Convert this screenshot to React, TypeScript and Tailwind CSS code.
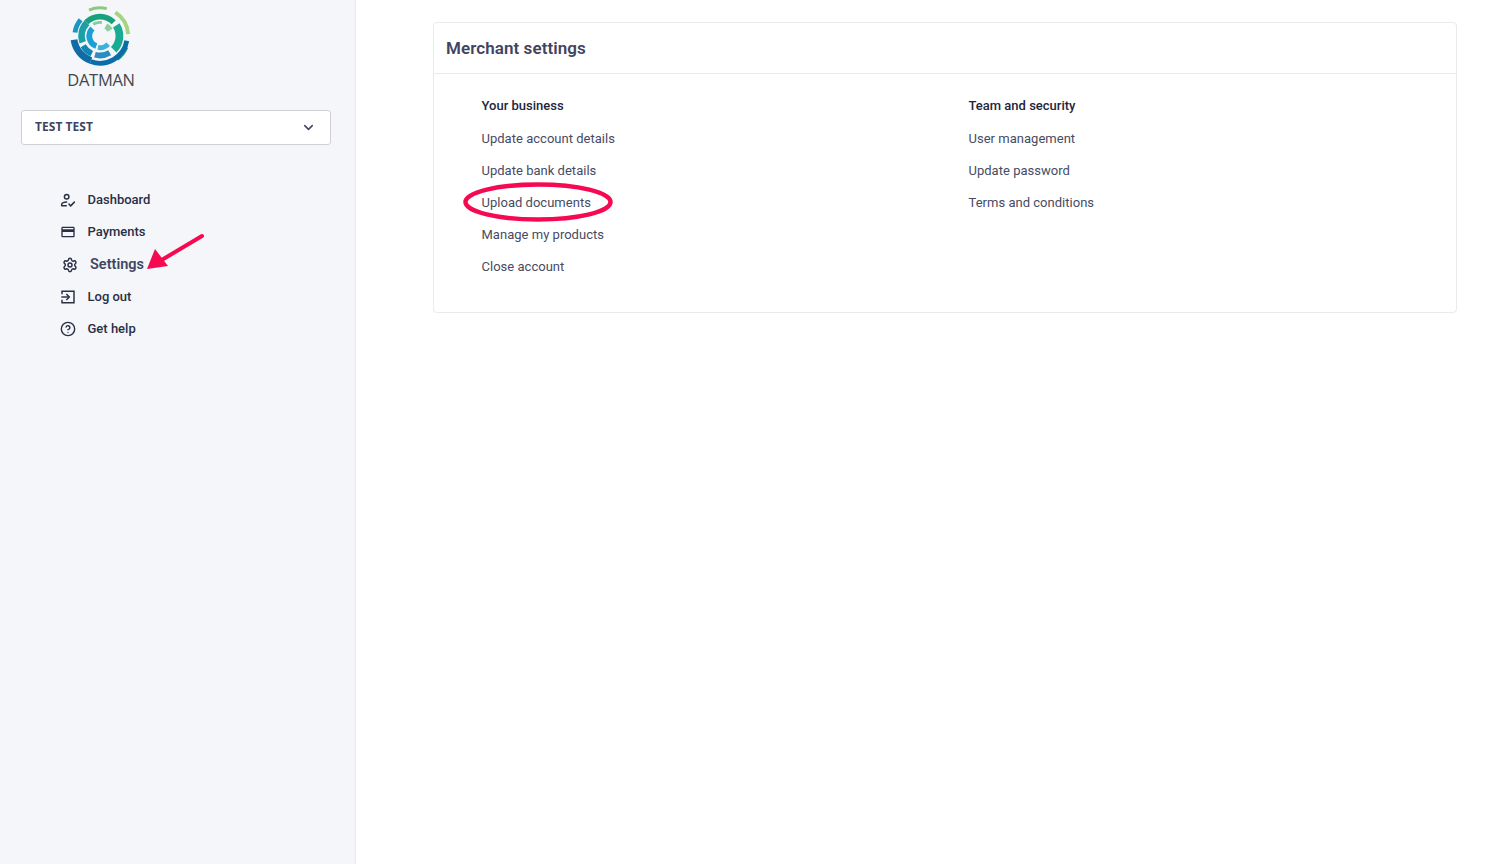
import React from 'react';
import { ChevronDown, HelpCircle, Settings } from 'lucide-react';

// Polar helper for the logo rings, angle 0 is at 12 o'clock
const arc = (r: number, from: number, to: number) => {
  const pt = (a: number) => {
    const rad = ((a - 90) * Math.PI) / 180;
    return `${(50 + r * Math.cos(rad)).toFixed(2)} ${(50 + r * Math.sin(rad)).toFixed(2)}`;
  };
  return `M${pt(from)} A${r} ${r} 0 ${to - from > 180 ? 1 : 0} 1 ${pt(to)}`;
};

const logoArcs: [number, number, number, string, number][] = [
  [29, -23, 14, '#8cc97f', 3],
  [29, 33, 86, '#a5d47f', 4],
  [29, 113, 144, '#2f9e6d', 5],
  [26, -82, -50, '#1d94c4', 5],
  [28, 100, 200, '#0a6fa8', 5],
  [27, 200, 262, '#0f6ca6', 7],
  [20, -45, 45, '#18a27c', 6],
  [20, 57, 135, '#1bab93', 8],
  [20, 150, 195, '#2a8dc0', 6],
  [20, 205, 240, '#1386b8', 6],
  [19, 250, 315, '#1aa0a5', 7],
  [14, -30, 8, '#7fcf9e', 3],
  [12, 30, 60, '#8bcf9a', 6],
  [12, 135, 190, '#38b3dd', 5],
  [11, 200, 315, '#1c9fd4', 6],
];

const DatmanLogo = () => (
  <div className="flex flex-col items-center pt-[2px]">
    <svg viewBox="15 15 70 70" className="w-[68px] h-[68px] -translate-x-[1px]">
      {logoArcs.map(([r, a, b, color, w]) => (
        <path key={`${r}-${a}`} d={arc(r, a, b)} fill="none" stroke={color} strokeWidth={w} />
      ))}
    </svg>
    <span className="text-[16.5px] leading-[20px] tracking-[-0.3px] text-[#43474c] font-['Open_Sans',sans-serif]">DATMAN</span>
  </div>
);

const DashboardIcon = ({ className }: { className?: string }) => (
  <svg viewBox="0 0 24 24" className={className} fill="none" stroke="currentColor" strokeWidth="2.2" strokeLinecap="round">
    <circle cx="10" cy="7" r="3.4" />
    <path d="M2.5 20v-1.2c0-2.4 3.6-3.8 7.5-3.8" />
    <path d="M2.5 20.5h7" />
    <path d="M13.5 18.2l2.6 2.6 5.4-5.6" />
  </svg>
);

const CardIcon = ({ className }: { className?: string }) => (
  <svg viewBox="0 0 24 24" className={className} fill="currentColor">
    <path d="M20 4H4c-1.11 0-1.99.89-1.99 2L2 18c0 1.11.89 2 2 2h16c1.11 0 2-.89 2-2V6c0-1.11-.89-2-2-2zm0 14H4v-6h16v6zm0-10H4V6h16v2z" />
  </svg>
);

const LogOutIcon = ({ className }: { className?: string }) => (
  <svg viewBox="0 0 24 24" className={className} fill="none" stroke="currentColor" strokeWidth="2.2">
    <path d="M3 8V3.5h18v17H3V16" />
    <path d="M2 12h11" />
    <path d="M9.5 7.5l4.5 4.5-4.5 4.5" />
  </svg>
);

const navItems = [
  { label: 'Dashboard', icon: DashboardIcon },
  { label: 'Payments', icon: CardIcon },
  { label: 'Settings', icon: Settings, active: true },
  { label: 'Log out', icon: LogOutIcon },
  { label: 'Get help', icon: HelpCircle },
];

const Sidebar = () => (
  <aside className="w-[356px] shrink-0 min-h-[864px] bg-[#f5f6fa] border-r border-[#e9eaef]">
    <div className="w-[202px]">
      <DatmanLogo />
    </div>
    <div className="mt-[20px] mx-[21px] w-[310px] h-[35px] flex items-center justify-between bg-white border border-[#cfd0d6] rounded-[3px] pl-[13px] pr-[14px]">
      <span className="pb-[2px] text-[12px] tracking-[0.05px] font-bold text-[#3f4462] font-['Noto_Sans',sans-serif]">TEST TEST</span>
      <ChevronDown className="w-[15px] h-[15px] text-[#3f4462]" strokeWidth={2.4} />
    </div>
    <nav className="mt-[39px] pl-[60px] flex flex-col">
      {navItems.map(({ label, icon: Icon, active }) => (
        <div key={label} className={active ? 'h-[33px] flex items-center' : 'h-[32px] flex items-center'}>
          {active ? (
            <>
              <Icon className="w-[16px] h-[16px] ml-[2px] text-[#2b2f44]" strokeWidth={2.2} />
              <span className="ml-[12px] text-[14.5px] font-semibold text-[#414662]">{label}</span>
            </>
          ) : (
            <>
              <Icon className="w-[16px] h-[16px] text-[#2b2f44]" strokeWidth={2.1} />
              <span className="ml-[11.5px] text-[13px] font-medium text-[#2b2f44]">{label}</span>
            </>
          )}
        </div>
      ))}
    </nav>
    {/* annotation arrow */}
    <svg className="absolute left-[140px] top-[228px] w-[70px] h-[46px]" viewBox="0 0 70 46">
      <path d="M62 8 L20 33" fill="none" stroke="#f50a52" strokeWidth="4" strokeLinecap="round" />
      <path d="M7 41 L15 21 L28 38 Z" fill="#f50a52" />
    </svg>
  </aside>
);

const LinkColumn = ({ title, links }: { title: string; links: string[] }) => (
  <div className="flex-1">
    <div className="h-[33px] pb-[2px] flex items-center text-[13px] font-medium text-[#23263a]">{title}</div>
    {links.map((link) => (
      <div key={link} className="h-[32px] flex items-center text-[13px] tracking-[0.02px] text-[#474b63]">
        {link}
      </div>
    ))}
  </div>
);

export default function App() {
  return (
    <div className="relative flex min-h-[864px] bg-white font-['Roboto',sans-serif] overflow-hidden">
      <Sidebar />
      <main className="flex-1 pl-[77px] pr-[40px] pt-[22px]">
        <section className="h-[291px] bg-white border border-[#e9eaee] rounded-[4px]">
          <h1 className="h-[51px] pt-[2px] flex items-center pl-[12px] text-[17px] tracking-[0.08px] font-semibold text-[#3f4462] border-b border-[#e9eaee]">
            Merchant settings
          </h1>
          <div className="flex pl-[47.5px] pt-[16px]">
            <div className="w-[487px]">
              <LinkColumn
                title="Your business"
                links={['Update account details', 'Update bank details', 'Upload documents', 'Manage my products', 'Close account']}
              />
            </div>
            <LinkColumn title="Team and security" links={['User management', 'Update password', 'Terms and conditions']} />
          </div>
        </section>
      </main>
      {/* annotation ring round Upload documents */}
      <svg className="absolute left-[460px] top-[180px] w-[156px] h-[44px]" viewBox="0 0 156 44">
        <ellipse cx="78" cy="22" rx="72.5" ry="17.5" fill="none" stroke="#f50a52" strokeWidth="4.5" />
      </svg>
    </div>
  );
}
